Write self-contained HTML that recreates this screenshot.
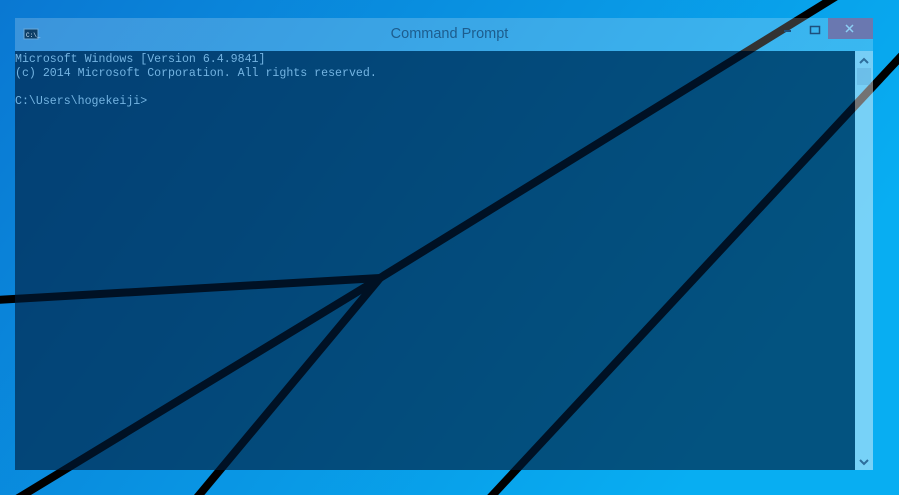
<!DOCTYPE html>
<html><head><style>
html,body{margin:0;padding:0;width:899px;height:495px;overflow:hidden;position:relative;font-family:"Liberation Sans",sans-serif}
svg.bg{position:absolute;left:0;top:0}
.title{position:absolute;left:15px;top:18px;width:858px;height:33px;background:rgba(255,255,255,0.2)}
.client{position:absolute;left:15px;top:51px;width:840px;height:419px;background:rgba(0,28,58,0.62)}
.scroll{position:absolute;left:855px;top:51px;width:18px;height:419px;background:rgba(255,255,255,0.45)}
.thumb{position:absolute;left:857px;top:68px;width:14px;height:17px;background:rgba(90,160,210,0.35)}
.close{position:absolute;left:828px;top:18px;width:45px;height:21px;background:#6a78b0}
.tt{position:absolute;left:0;width:899px;top:26px;text-align:center;font-size:14.5px;color:#1d5d8e}
pre{position:absolute;left:15px;top:53px;margin:0;font-family:"Liberation Mono",monospace;font-size:11.6px;line-height:14px;color:#74b4e2}
</style></head><body>
<svg class="bg" width="899" height="495">
<defs><linearGradient id="g" x1="0" y1="0" x2="1" y2="0.4">
<stop offset="0" stop-color="#0a78d2"/><stop offset="1" stop-color="#08aef2"/></linearGradient></defs>
<rect width="899" height="495" fill="url(#g)"/>
<g stroke="#000" stroke-width="8" fill="none">
<line x1="-5" y1="300" x2="380" y2="278"/>
<line x1="380" y1="278" x2="840" y2="-6"/>
<line x1="380" y1="278" x2="15" y2="500"/>
<line x1="380" y1="278" x2="195" y2="500"/>
<line x1="905" y1="52" x2="488" y2="500"/>
</g>
</svg>
<div class="title"></div>
<div class="client"></div>
<div class="scroll"></div>
<div class="thumb"></div>
<div class="close"></div>
<svg style="position:absolute;left:0;top:0" width="899" height="495">
<rect x="24" y="29" width="14" height="10" fill="#0e3f66" stroke="#6aa8d8" stroke-width="1"/>
<text x="26" y="37" font-family="Liberation Mono" font-size="6" fill="#cfe6f8">C:\_</text>
<line x1="784" y1="31" x2="791" y2="31" stroke="#1d4f7c" stroke-width="2"/>
<rect x="810.5" y="26.5" width="9" height="7" fill="none" stroke="#1d4f7c" stroke-width="1.5"/>
<path d="M846 25l7 7M853 25l-7 7" stroke="#8ccff5" stroke-width="1.5"/>
<path d="M860 63l4-4 4 4" stroke="#2d6d9c" stroke-width="2" fill="none"/>
<path d="M860 460l4 4 4-4" stroke="#2d6d9c" stroke-width="2" fill="none"/>
</svg>
<div class="tt">Command Prompt</div>
<pre>Microsoft Windows [Version 6.4.9841]
(c) 2014 Microsoft Corporation. All rights reserved.

C:\Users\hogekeiji&gt;</pre>
</body></html>
